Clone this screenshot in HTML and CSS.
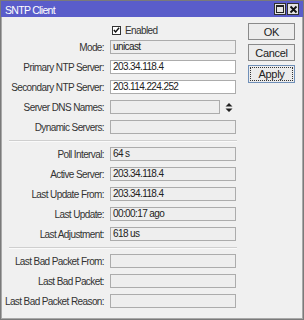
FILE: index.html
```html
<!DOCTYPE html>
<html>
<head>
<meta charset="utf-8">
<link rel="stylesheet" href="styles.css">
</head>
<body>
<div class="win">
  <div class="title">
    <span class="title-text">SNTP Client</span>
    <div class="title-btns">
      <span class="tbtn"><span class="sq"></span></span>
      <span class="tbtn"><svg width="9" height="9" viewBox="0 0 9 9"><path d="M1.5 1.5 L7.5 7.5 M7.5 1.5 L1.5 7.5" stroke="#111" stroke-width="1.8"/></svg></span>
    </div>
  </div>
  <div class="content">
    <div class="form">
      <div class="row check-row">
        <span></span>
        <label class="chk"><span class="box"><svg width="8" height="8" viewBox="0 0 8 8"><path d="M1 4 L3 6.2 L7 1.5" fill="none" stroke="#111" stroke-width="1.6"/></svg></span>Enabled</label>
      </div>
      <div class="row"><span class="lbl">Mode:</span><span class="fld ro">unicast</span></div>
      <div class="row"><span class="lbl">Primary NTP Server:</span><span class="fld ed">203.34.118.4</span></div>
      <div class="row"><span class="lbl">Secondary NTP Server:</span><span class="fld ed">203.114.224.252</span></div>
      <div class="row"><span class="lbl">Server DNS Names:</span><span class="fld-wrap"><span class="fld ro short"></span><svg class="spin" width="8" height="9" viewBox="0 0 8 9"><path d="M4 0 L7.5 3.5 L0.5 3.5 Z M0.5 5.5 L7.5 5.5 L4 9 Z" fill="#222"/></svg></span></div>
      <div class="row"><span class="lbl">Dynamic Servers:</span><span class="fld ro"></span></div>
      <div class="sep"></div>
      <div class="row"><span class="lbl">Poll Interval:</span><span class="fld ro">64 s</span></div>
      <div class="row"><span class="lbl">Active Server:</span><span class="fld ro">203.34.118.4</span></div>
      <div class="row"><span class="lbl">Last Update From:</span><span class="fld ro">203.34.118.4</span></div>
      <div class="row"><span class="lbl">Last Update:</span><span class="fld ro">00:00:17 ago</span></div>
      <div class="row"><span class="lbl">Last Adjustment:</span><span class="fld ro">618 us</span></div>
      <div class="sep"></div>
      <div class="row"><span class="lbl">Last Bad Packet From:</span><span class="fld ro"></span></div>
      <div class="row"><span class="lbl">Last Bad Packet:</span><span class="fld ro"></span></div>
      <div class="row"><span class="lbl">Last Bad Packet Reason:</span><span class="fld ro"></span></div>
    </div>
    <div class="btns">
      <button class="btn">OK</button>
      <button class="btn">Cancel</button>
      <button class="btn focus"><span class="focus-in">Apply</span></button>
    </div>
  </div>
</div>
</body>
</html>
```
FILE: styles.css
```css
html, body {
  margin: 0;
  padding: 0;
  background: #ffffff;
}
body {
  font-family: "Liberation Sans", Arial, sans-serif;
  font-size: 10px;
  letter-spacing: -0.6px;
  color: #222;
}
.win {
  width: 304px;
  height: 320px;
  box-sizing: border-box;
  border: 1px solid #7a7a7a;
  background: #f0f0f0;
  display: flex;
  flex-direction: column;
}
.title {
  height: 16px;
  background: #5a5dca;
  color: #fff;
  display: flex;
  align-items: center;
  justify-content: space-between;
  padding: 0 4px 0 4px;
  font-size: 10.5px;
  letter-spacing: -0.7px;
}
.title-text {
  padding-top: 1px;
}
.title-btns {
  display: flex;
  gap: 1px;
}
.tbtn {
  width: 10px;
  height: 10px;
  background: #e4e4e4;
  border: 1px solid #303030;
  display: flex;
  align-items: center;
  justify-content: center;
}
.sq {
  width: 6px;
  height: 5px;
  border: 1px solid #222;
  border-top-width: 2px;
}
.content {
  flex: 1;
  display: flex;
  border: 1px solid #a8a8a8;
  border-top: none;
}
.form {
  width: 235px;
  padding-top: 6px;
  display: flex;
  flex-direction: column;
}
.row {
  display: grid;
  grid-template-columns: 102px 126px;
  column-gap: 6px;
  height: 14px;
  align-items: center;
  margin-bottom: 6px;
}
.check-row {
  margin-bottom: 3px;
}
.lbl {
  text-align: right;
  white-space: nowrap;
  color: #333;
}
.fld {
  box-sizing: border-box;
  height: 14px;
  border: 1px solid #acacac;
  padding-left: 2px;
  line-height: 12px;
  white-space: nowrap;
  color: #222;
}
.ro {
  background: #eeeeee;
}
.ed {
  background: #ffffff;
}
.fld-wrap {
  display: flex;
  align-items: center;
  gap: 5px;
}
.short {
  width: 110px;
}
.spin {
  display: block;
}
.chk {
  display: flex;
  align-items: center;
  gap: 4px;
  margin-left: 2px;
  color: #333;
}
.box {
  width: 9px;
  height: 9px;
  border: 1px solid #333;
  background: #fff;
  display: flex;
  align-items: center;
  justify-content: center;
  box-sizing: border-box;
}
.sep {
  height: 1px;
  background: #cfcfcf;
  border-bottom: 1px solid #fafafa;
  margin: 0 0 5px 7px;
  width: 228px;
}
.btns {
  padding-top: 6px;
  margin-left: 11px;
  display: flex;
  flex-direction: column;
  gap: 4px;
}
.btn {
  width: 47px;
  height: 17px;
  box-sizing: border-box;
  border: 1px solid #8a8a8a;
  background: #ececec;
  font-family: "Liberation Sans", Arial, sans-serif;
  font-size: 11px;
  letter-spacing: -0.3px;
  color: #222;
  padding: 0;
  display: flex;
  align-items: center;
  justify-content: center;
}
.focus {
  height: 18px;
  border-color: #6f8fb8;
  padding: 1px;
}
.focus-in {
  flex: 1;
  align-self: stretch;
  border: 1px dotted #333;
  display: flex;
  align-items: center;
  justify-content: center;
}
```
